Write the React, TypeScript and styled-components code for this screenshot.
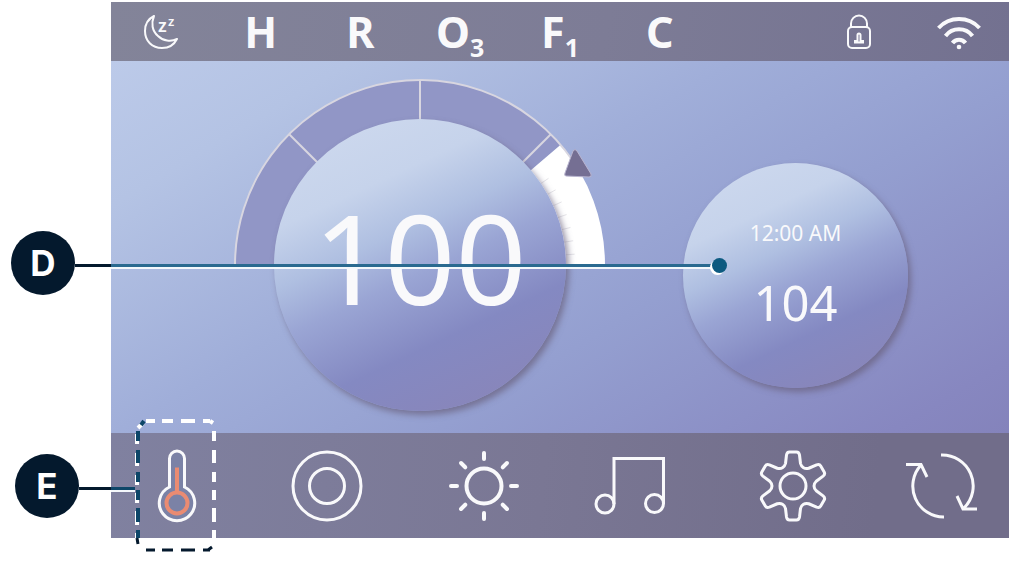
import React from "react";
import styled, { createGlobalStyle } from "styled-components";

const NAVY = "#04192d";
const TEAL = "#0d4668";
const INK = "#f9f9fb";

const GlobalStyle = createGlobalStyle`
  * { box-sizing: border-box; }
  body {
    margin: 0;
    background: #ffffff;
    font-family: "Noto Sans", "Open Sans", sans-serif;
  }
`;

const Figure = styled.main`
  padding: 2px 15px 22px 111px;
`;

const Panel = styled.section`
  display: flex;
  flex-direction: column;
  min-width: 760px;
  color: ${INK};
`;

const StatusBar = styled.ul`
  display: grid;
  grid-template-columns: repeat(9, 1fr);
  align-items: center;
  height: 59px;
  margin: 0;
  padding: 0;
  list-style: none;
  background: linear-gradient(100deg, #838499, #7d7c96 55%, #737190);
`;

const StatusItem = styled.li<{ $column?: number }>`
  display: flex;
  justify-content: center;
  align-items: center;
  grid-column: ${(p) => p.$column ?? "auto"};
  font-size: 43px;
  font-weight: 700;
  line-height: 56px;

  sub {
    align-self: flex-end;
    font-size: 25px;
    line-height: 26px;
  }
`;

const Stage = styled.div`
  position: relative;
  display: grid;
  grid-template-columns: 123fr 372px 77fr 225px 101fr;
  align-items: start;
  padding: 18px 0 22px;
  background: linear-gradient(149deg, #bccae9, #b4c3e4 16%, #a0aed9 41%, #949fd0 62%, #8787c0 92%, #8483bb);
`;

const Dial = styled.div`
  display: grid;
  grid-column: 2;
  justify-items: center;

  > * {
    grid-area: 1 / 1;
  }
`;

const Disc = styled.div<{ $size: number }>`
  display: flex;
  flex-direction: column;
  align-items: center;
  width: ${(p) => p.$size}px;
  height: ${(p) => p.$size}px;
  border-radius: 50%;
  background: linear-gradient(155deg, #cbd7ed 12%, #c6d3eb 26%, #afbfe1 40%, #9aa5d4 52%, #8489c2 70%, #8886bb 88%);
  box-shadow: 3px 4px 6px rgba(104, 96, 124, 0.7);
`;

const MainDisc = styled(Disc)`
  margin-top: 40px;
  padding-top: 68px;
`;

const SideDisc = styled(Disc)`
  grid-column: 4;
  margin-top: 84px;
  padding-top: 54px;
`;

const Reading = styled.output`
  font-size: 124px;
  line-height: 140px;
`;

const Clock = styled.time`
  font-size: 21px;
  line-height: 32px;
`;

const SetPoint = styled.output`
  margin-top: 20px;
  font-size: 49px;
  line-height: 66px;
`;

const NavBar = styled.nav`
  position: relative;
  display: grid;
  grid-template-columns: 132fr 168fr 146fr 148fr 176fr 128fr;
  height: 105px;
  background: linear-gradient(95deg, #8081a0, #7a7794 48%, #716d8a 85%);
`;

const NavButton = styled.button`
  position: relative;
  display: flex;
  justify-content: center;
  align-items: center;
  padding: 0;
  border: 0;
  background: none;
  color: inherit;
  cursor: pointer;
`;

const Icon = styled.svg`
  display: block;
  flex: none;
  overflow: visible;
  fill: none;
  stroke: ${INK};
  stroke-width: 3;
`;

const Highlight = styled.svg`
  position: absolute;
  top: -14px;
  left: calc(50% - 41px);
  overflow: visible;
  pointer-events: none;
`;

const Callout = styled.div<{ $top: number; $left: number; $right?: string }>`
  position: absolute;
  z-index: 1;
  top: ${(p) => p.$top}px;
  left: ${(p) => p.$left}px;
  right: ${(p) => p.$right ?? "auto"};
  display: flex;
  align-items: center;
`;

const Badge = styled.span`
  display: grid;
  place-items: center;
  width: 64px;
  height: 64px;
  border-radius: 50%;
  background: ${NAVY};
  color: #ffffff;
  font-family: Inter, sans-serif;
  font-size: 35px;
  font-weight: 700;
  line-height: 40px;
`;

const LeadOutside = styled.span<{ $width: number }>`
  width: ${(p) => p.$width}px;
  height: 3px;
  margin-top: 4px;
  background: ${NAVY};
`;

const LeadInside = styled.span<{ $width?: number }>`
  flex: ${(p) => (p.$width ? `0 0 ${p.$width}px` : "1")};
  height: 5px;
  margin-top: 6px;
  border-bottom: 2px solid #f4f8fc;
  background: ${(p) => (p.$width ? TEAL : "#2a6a90")};
`;

const LeadDot = styled.span`
  width: 15px;
  height: 15px;
  margin-top: 5px;
  border-radius: 50%;
  background: #0d5a80;
  box-shadow: -2px 2px 0 #ffffff;
`;

const CENTER = 186;
const OUTER = 185;
const INNER = 145;

function polar(radius: number, degrees: number) {
  const a = (degrees * Math.PI) / 180;
  return `${(CENTER + radius * Math.cos(a)).toFixed(2)} ${(CENTER - radius * Math.sin(a)).toFixed(2)}`;
}

function band(from: number, to: number) {
  return `M${polar(OUTER, from)} A${OUTER} ${OUTER} 0 0 1 ${polar(OUTER, to)} L${polar(INNER, to)} A${INNER} ${INNER} 0 0 0 ${polar(INNER, from)} Z`;
}

const TICKS = [4, 9, 14, 19, 24, 29, 34];

function Gauge() {
  return (
    <svg width="372" height="188" viewBox="0 0 372 188" aria-hidden="true">
      <path d={band(180, 40.5)} fill="#9196c6" />
      <path d={band(40.5, 0)} fill="#ffffff" />
      {TICKS.map((t) => (
        <path key={t} d={`M${polar(146, t)} L${polar(155, t)}`} stroke="#e6e5e9" strokeWidth="1" />
      ))}
      <path
        d={`M${polar(INNER, 180)} L${polar(OUTER, 180)} A${OUTER} ${OUTER} 0 0 1 ${polar(OUTER, 34)}`}
        fill="none"
        stroke="#d8d6e0"
        strokeWidth="2"
      />
      {[135, 90, 45].map((t) => (
        <path key={t} d={`M${polar(INNER, t)} L${polar(OUTER, t)}`} stroke="#d8d6e0" strokeWidth="2" />
      ))}
      <path
        d="M339 72Q341 69 343 72L357 95Q358 98 355 98L332 97Q330 97 331 94Z"
        fill="#756f93"
        stroke="#b9b5d0"
        strokeWidth="1"
      />
    </svg>
  );
}

function MoonIcon() {
  return (
    <Icon width="34" height="36" viewBox="0 0 34 36" role="img" aria-label="Sleep">
      <g strokeWidth="2" strokeLinejoin="round">
        <path d="M10 2C4 5 1 11 1 17C1 27 8 34 18 34C25 34 30 31 33 25C27 28 19 27 14 22C8 17 7 9 10 2Z" />
      </g>
      <g fill={INK} stroke="none" fontWeight="600">
        <text x="14" y="18" fontSize="18">z</text>
        <text x="24" y="12" fontSize="13">z</text>
      </g>
    </Icon>
  );
}

function LockIcon() {
  return (
    <Icon width="28" height="36" viewBox="0 0 28 36" role="img" aria-label="Locked">
      <g strokeWidth="2">
        <rect x="3" y="13" width="22" height="21" rx="4" />
        <path d="M6 13V9.5a8 8 0 0 1 16 0V13" />
        <path d="M12.5 27v-6a1.500 1.500 0 0 1 3 0v6h2.500v1.500h-8V27z" />
      </g>
    </Icon>
  );
}

function WifiIcon() {
  return (
    <Icon width="44" height="38" viewBox="0 0 44 38" role="img" aria-label="Wi-Fi">
      <g strokeWidth="4">
        <path d="M1.500 15A28 28 0 0 1 42.500 15M8.500 23A17 17 0 0 1 35.500 23M15.500 30A8 8 0 0 1 28.500 30" />
      </g>
      <circle cx="22" cy="34" r="2.300" fill={INK} stroke="none" />
    </Icon>
  );
}

function ThermometerIcon() {
  return (
    <Icon width="40" height="74" viewBox="0 0 40 74" aria-hidden="true">
      <path
        d="M12.500 38V9.500a7.500 7.500 0 0 1 15 0V38A17.700 17.700 0 1 1 12.500 38Z"
        fill="#7b82a6"
      />
      <g stroke="#ea8b72" strokeWidth="4">
        <circle cx="20" cy="54" r="10.500" />
        <path d="M20 18.500V43" />
      </g>
    </Icon>
  );
}

function JetsIcon() {
  return (
    <Icon width="74" height="74" viewBox="0 0 74 74" aria-hidden="true">
      <circle cx="37" cy="37" r="34" />
      <circle cx="37" cy="37" r="17.500" />
    </Icon>
  );
}

function LightIcon() {
  return (
    <Icon width="74" height="74" viewBox="0 0 74 74" aria-hidden="true">
      <g strokeWidth="4">
        <circle cx="37" cy="37" r="17.500" />
        {[0, 45, 90, 135, 180, 225, 270, 315].map((a) => (
          <path
            key={a}
            d={a % 90 ? "M37 4.500V10.500" : "M37 4V10"}
            strokeLinecap="round"
            transform={`rotate(${a} 37 37)`}
          />
        ))}
      </g>
    </Icon>
  );
}

function MusicIcon() {
  return (
    <Icon width="74" height="74" viewBox="0 0 74 74" aria-hidden="true">
      <path d="M20 55V9.500H69.500V55" />
      <circle cx="11" cy="55" r="9" />
      <circle cx="60.500" cy="54.500" r="9" />
    </Icon>
  );
}

function gearPath() {
  const at = (x: number, y: number, degrees: number) => {
    const a = (degrees * Math.PI) / 180;
    const px = 37 + x * Math.cos(a) - y * Math.sin(a);
    const py = 37 + x * Math.sin(a) + y * Math.cos(a);
    return `${px.toFixed(2)} ${py.toFixed(2)}`;
  };
  return (
    [0, 60, 120, 180, 240, 300]
      .map(
        (t, i) =>
          `${i ? "L" : "M"}${at(-7.5, -22.5, t)} L${at(-6.5, -31, t)} Q${at(-6, -34, t)} ${at(-3.5, -34, t)}` +
          ` L${at(3.5, -34, t)} Q${at(6, -34, t)} ${at(6.5, -31, t)} L${at(7.5, -22.5, t)}` +
          ` C${at(8.5, -18.5, t)} ${at(-8.5, -18.5, t + 60)} ${at(-7.5, -22.5, t + 60)}`
      )
      .join(" ") + "Z"
  );
}

function SettingsIcon() {
  return (
    <Icon width="74" height="74" viewBox="0 0 74 74" aria-hidden="true">
      <path d={gearPath()} strokeLinejoin="round" />
      <circle cx="37" cy="37" r="13" />
    </Icon>
  );
}

function FlipIcon() {
  return (
    <Icon width="74" height="74" viewBox="3 0 74 74" aria-hidden="true">
      <path d="M36 6A31 31 0 0 1 59 59M52 47L58 60H72" />
      <path d="M39 68A31 31 0 0 1 16 16M1 15.500H16L22 28" />
    </Icon>
  );
}

const ROWS = [[12, 22], [31, 44], [53, 63], [71, 81], [89, 103], [111, 119]];
const COLUMNS = [[10, 19], [26, 37], [45, 59], [67, 74]];

function DashedFrame() {
  const rows = (x: number, shift = 0) => ROWS.map(([a, b]) => `M${x} ${a + shift}V${b + shift}`).join("");
  const columns = (y: number) => COLUMNS.map(([a, b]) => `M${a} ${y}H${b}`).join("");
  return (
    <Highlight width="82" height="134" viewBox="0 0 82 134" fill="none" strokeWidth="4" aria-hidden="true">
      <path d={columns(2) + rows(78) + "M2 9L7 4M74 2L77 4"} stroke="#ffffff" />
      <path d={rows(1, 3)} stroke="#ffffff" />
      <path d={rows(2) + "M5 6L8 2"} stroke={TEAL} />
      <path d={columns(131) + "M1 119L2 125M72 131L76 128"} stroke={NAVY} strokeWidth="3" />
    </Highlight>
  );
}

export default function App() {
  return (
    <>
      <GlobalStyle />
      <Figure>
        <Panel>
          <StatusBar>
            <StatusItem><MoonIcon /></StatusItem>
            <StatusItem>H</StatusItem>
            <StatusItem>R</StatusItem>
            <StatusItem>O<sub>3</sub></StatusItem>
            <StatusItem>F<sub>1</sub></StatusItem>
            <StatusItem>C</StatusItem>
            <StatusItem $column={8}><LockIcon /></StatusItem>
            <StatusItem $column={9}><WifiIcon /></StatusItem>
          </StatusBar>

          <Stage>
            <Dial>
              <Gauge />
              <MainDisc $size={292}>
                <Reading>100</Reading>
              </MainDisc>
            </Dial>
            <SideDisc $size={225}>
              <Clock>12:00 AM</Clock>
              <SetPoint>104</SetPoint>
            </SideDisc>
            <Callout $top={170} $left={-100} $right="calc((100% - 597px) * 0.336 + 181px)">
              <Badge>D</Badge>
              <LeadOutside $width={36} />
              <LeadInside />
              <LeadDot />
            </Callout>
          </Stage>

          <NavBar>
            <NavButton type="button" aria-label="Temperature">
              <ThermometerIcon />
              <DashedFrame />
            </NavButton>
            <NavButton type="button" aria-label="Jets"><JetsIcon /></NavButton>
            <NavButton type="button" aria-label="Light"><LightIcon /></NavButton>
            <NavButton type="button" aria-label="Music"><MusicIcon /></NavButton>
            <NavButton type="button" aria-label="Settings"><SettingsIcon /></NavButton>
            <NavButton type="button" aria-label="Flip screen"><FlipIcon /></NavButton>
            <Callout $top={21} $left={-96}>
              <Badge>E</Badge>
              <LeadOutside $width={32} />
              <LeadInside $width={24} />
            </Callout>
          </NavBar>
        </Panel>
      </Figure>
    </>
  );
}
